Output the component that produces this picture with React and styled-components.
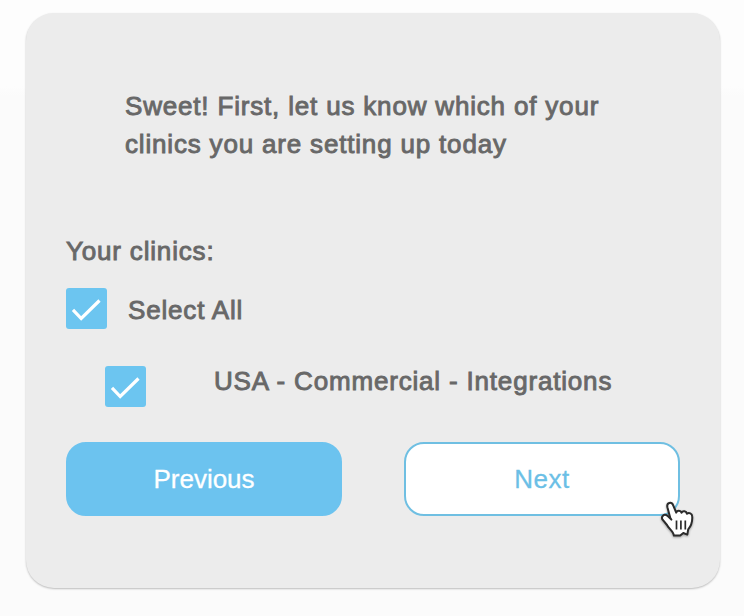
import styled, { createGlobalStyle } from "styled-components";

const GlobalStyle = createGlobalStyle`
  * {
    box-sizing: border-box;
  }
  body {
    margin: 0;
    background: linear-gradient(#fdfdfd 0 86px, #fbfbfb 96px);
    font-family: "Liberation Sans", Arial, sans-serif;
  }
`;

const Page = styled.main`
  height: 616px;
  padding: 13px 24px 0 26px;
`;

const Card = styled.form`
  height: 575px;
  padding: 74px 40px 0;
  background: #ececec;
  border-radius: 28px;
  box-shadow: 0 1px 2px rgba(0, 0, 0, 0.25);
`;

const Text = styled.span`
  font-size: 26px;
  line-height: 38px;
  color: #686868;
  white-space: nowrap;
  letter-spacing: 0.82px;
  -webkit-text-stroke: 0.9px #686868;
`;

const Title = styled(Text).attrs({ as: "h1" })`
  margin: 0 0 69px 59px;
  font-weight: 400;
`;

const Label = styled(Text).attrs({ as: "p" })`
  margin: 0 0 18px;
`;

const Option = styled.label`
  display: flex;
  align-items: flex-start;
  height: 41px;
  gap: ${(props) => props.$gap}px;
  margin: 0 0 ${(props) => props.$bottom}px ${(props) => props.$indent || 0}px;
`;

const OptionText = styled(Text)`
  margin-top: ${(props) => props.$top}px;
`;

const Box = styled.span`
  display: flex;
  flex: none;
  width: 41px;
  height: 41px;
  background: #6cc5f0;
  border-radius: 3px;
`;

const Buttons = styled.div`
  display: flex;
  justify-content: space-between;
`;

const Button = styled.button`
  position: relative;
  width: 276px;
  height: 74px;
  padding: 0;
  font-family: inherit;
  font-size: 26px;
  letter-spacing: ${(props) => props.$spacing || 0}px;
  color: ${(props) => (props.$outline ? "#6bbfe6" : "#fff")};
  background: ${(props) => (props.$outline ? "#fff" : "#6cc3ef")};
  border: 2px solid ${(props) => (props.$outline ? "#6fbfe2" : "#6cc3ef")};
  border-radius: 20px;
  -webkit-text-stroke: 0.3px currentColor;
`;

const Cursor = styled.svg`
  position: absolute;
  right: -18px;
  bottom: -25px;
  filter: drop-shadow(0 1px 1px rgba(0, 0, 0, 0.35));
`;

function Checkbox() {
  return (
    <Box>
      <svg width="41" height="41" viewBox="0 0 41 41" fill="none">
        <path d="M7 21.8 15.2 30.5 33.5 12.5" stroke="#fff" strokeWidth="3.2" />
      </svg>
    </Box>
  );
}

function HandCursor() {
  return (
    <Cursor width="36" height="38" viewBox="0 0 36 38">
      <path
        d="M10.3 17 7.4 6.2C6.4 1.4 11.6.2 13.2 4.4L16.2 11.6C17.2 9.2 20.7 9.2 21.5 11.8 22.8 9.4 26.3 10 26.9 12.8 28.9 11.1 32.1 12.3 32.2 15.4 32.6 21 31.2 25 28.2 28.4L27.3 33.6 23.3 32 20.2 34.6 13.9 34.6C13.4 30.4 9 27.8 7 24L2.6 18.7C.7 15.6 3.9 12.5 7.2 14.6L11.4 18.6Z"
        fill="#fff"
        stroke="#2b2b2b"
        strokeWidth="2"
        strokeLinejoin="round"
      />
      <path d="M16.5 19.5v9M20.9 19.5v9M25.3 19.5v9" stroke="#2b2b2b" strokeWidth="1.7" />
    </Cursor>
  );
}

export default function App() {
  return (
    <>
      <GlobalStyle />
      <Page>
        <Card>
          <Title>
            Sweet! First, let us know which of your
            <br />
            clinics you are setting up today
          </Title>
          <Label>Your clinics:</Label>
          <Option $gap={21} $bottom={37}>
            <Checkbox />
            <OptionText $top={3}>Select All</OptionText>
          </Option>
          <Option $gap={68} $indent={39} $bottom={35}>
            <Checkbox />
            <OptionText $top={-4}>USA - Commercial - Integrations</OptionText>
          </Option>
          <Buttons>
            <Button type="button">Previous</Button>
            <Button type="button" $outline $spacing={0.5}>
              Next
              <HandCursor />
            </Button>
          </Buttons>
        </Card>
      </Page>
    </>
  );
}
